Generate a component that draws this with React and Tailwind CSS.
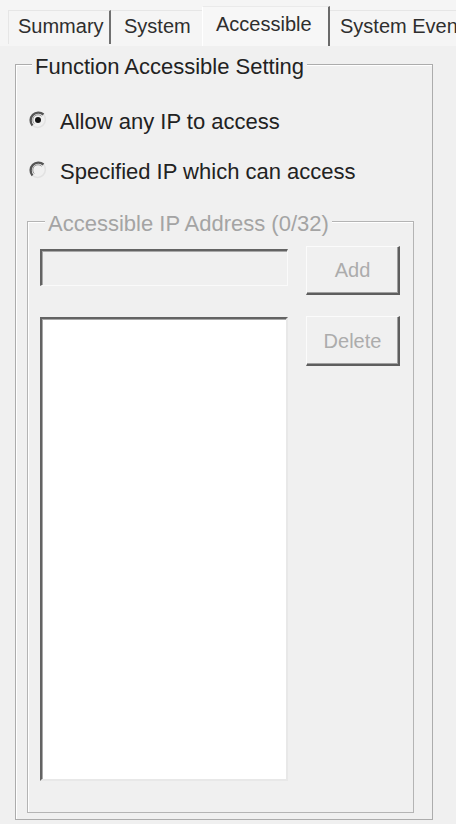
import React from "react";

function Radio({ checked }) {
  return (
    <svg width="18" height="18" viewBox="0 0 18 18" className="shrink-0 -mt-[4px] -ml-[1px] -mr-[1px]">
      <path d="M14.5 3.5 A7.8 7.8 0 0 1 3.5 14.5" fill="none" stroke="#e2e2e2" strokeWidth="1.5" />
      <path d="M3.5 14.5 A7.8 7.8 0 0 1 14.5 3.5" fill="none" stroke="#555555" strokeWidth="2.4" />
      <path d="M5.3 12.7 A5.2 5.2 0 0 1 12.7 5.3" fill="none" stroke="#9a9a9a" strokeWidth="1" />
      {checked && <circle cx="9" cy="9" r="3" fill="#111" />}
    </svg>
  );
}

export default function App() {
  return (
    <div
      className="w-[456px] h-[824px] bg-[#f0f0f0] overflow-hidden"
      style={{ fontFamily: '"Liberation Sans", Arial, sans-serif' }}
    >
      {/* Tab strip */}
      <div className="h-[46px] flex items-start bg-[#f5f5f5] text-[20px] leading-[24px] text-[#2e2e2e] whitespace-nowrap">
        <div className="shrink-0 ml-[8px] w-[103px] h-[34px] mt-[10px] pl-[9px] pt-[3px] border-r-2 border-[#707070] border-t border-t-[#e6e6e6] border-l border-l-[#e6e6e6]">
          Summary
        </div>
        <div className="shrink-0 w-[91px] h-[34px] mt-[10px] pl-[13px] pt-[3px] border-t border-[#e6e6e6]">System</div>
        <div className="shrink-0 w-[128px] h-[40px] mt-[6px] pl-[13px] pt-[5px] border-r-2 border-[#6a6a6a] bg-[#f7f7f7] border-t border-t-[#eaeaea] border-l border-l-[#ffffff]">
          Accessible
        </div>
        <div className="flex-1 min-w-0 overflow-hidden h-[34px] mt-[10px] pl-[10px] pt-[3px] border-t border-[#e6e6e6]">System Events</div>
      </div>

      {/* Outer group box */}
      <div className="ml-[15px] mt-[18px] w-[418px] h-[756px] border border-[#acacac] shadow-[inset_1px_1px_0_#ffffff] flex flex-col text-[22px] leading-[26px] text-[#222]">
        <div className="-mt-[11px] ml-[16px] w-fit px-[3px] bg-[#f0f0f0] whitespace-nowrap">
          Function Accessible Setting
        </div>

        <div className="mt-[29px] ml-[14px] flex items-center gap-[14px] whitespace-nowrap">
          <Radio checked />
          <span>Allow any IP to access</span>
        </div>
        <div className="mt-[24px] ml-[14px] flex items-center gap-[14px] whitespace-nowrap">
          <Radio />
          <span>Specified IP which can access</span>
        </div>

        {/* Inner group box */}
        <div className="mt-[36px] ml-[11px] w-[387px] h-[592px] border border-[#b4b4b4] shadow-[inset_1px_1px_0_#ffffff] flex flex-col">
          <div className="-mt-[11px] ml-[17px] w-fit px-[3px] bg-[#f0f0f0] text-[#a4a4a4] whitespace-nowrap">
            Accessible IP Address (0/32)
          </div>
          <div className="flex items-start">
            <div className="ml-[12px] mt-[12px] flex flex-col">
              <div className="w-[248px] h-[37px] bg-[#f0f0f0] border-t-2 border-l-2 border-[#636363] border-r border-b border-r-[#fafafa] border-b-[#fafafa] shadow-[inset_1px_1px_0_#a8a8a8]" />
              <div className="mt-[31px] w-[248px] h-[464px] bg-white border-t-2 border-l-2 border-[#636363] border-r-2 border-b-2 border-r-[#e8e8e8] border-b-[#e8e8e8] shadow-[inset_1px_1px_0_#a8a8a8]" />
            </div>
            <div className="ml-[18px] mt-[9px] flex flex-col">
              <div className="w-[94px] h-[49px] flex items-center justify-center text-[20px] text-[#acacac] bg-[#f0f0f0] border-t border-l border-[#fbfbfb] border-r-2 border-b-2 border-r-[#5e5e5e] border-b-[#5e5e5e] shadow-[inset_-1px_-1px_0_#a0a0a0]">
                Add
              </div>
              <div className="mt-[21px] w-[94px] h-[50px] flex items-center justify-center text-[20px] text-[#acacac] bg-[#f0f0f0] border-t border-l border-[#fbfbfb] border-r-2 border-b-2 border-r-[#5e5e5e] border-b-[#5e5e5e] shadow-[inset_-1px_-1px_0_#a0a0a0]">
                Delete
              </div>
            </div>
          </div>
        </div>
      </div>
    </div>
  );
}
